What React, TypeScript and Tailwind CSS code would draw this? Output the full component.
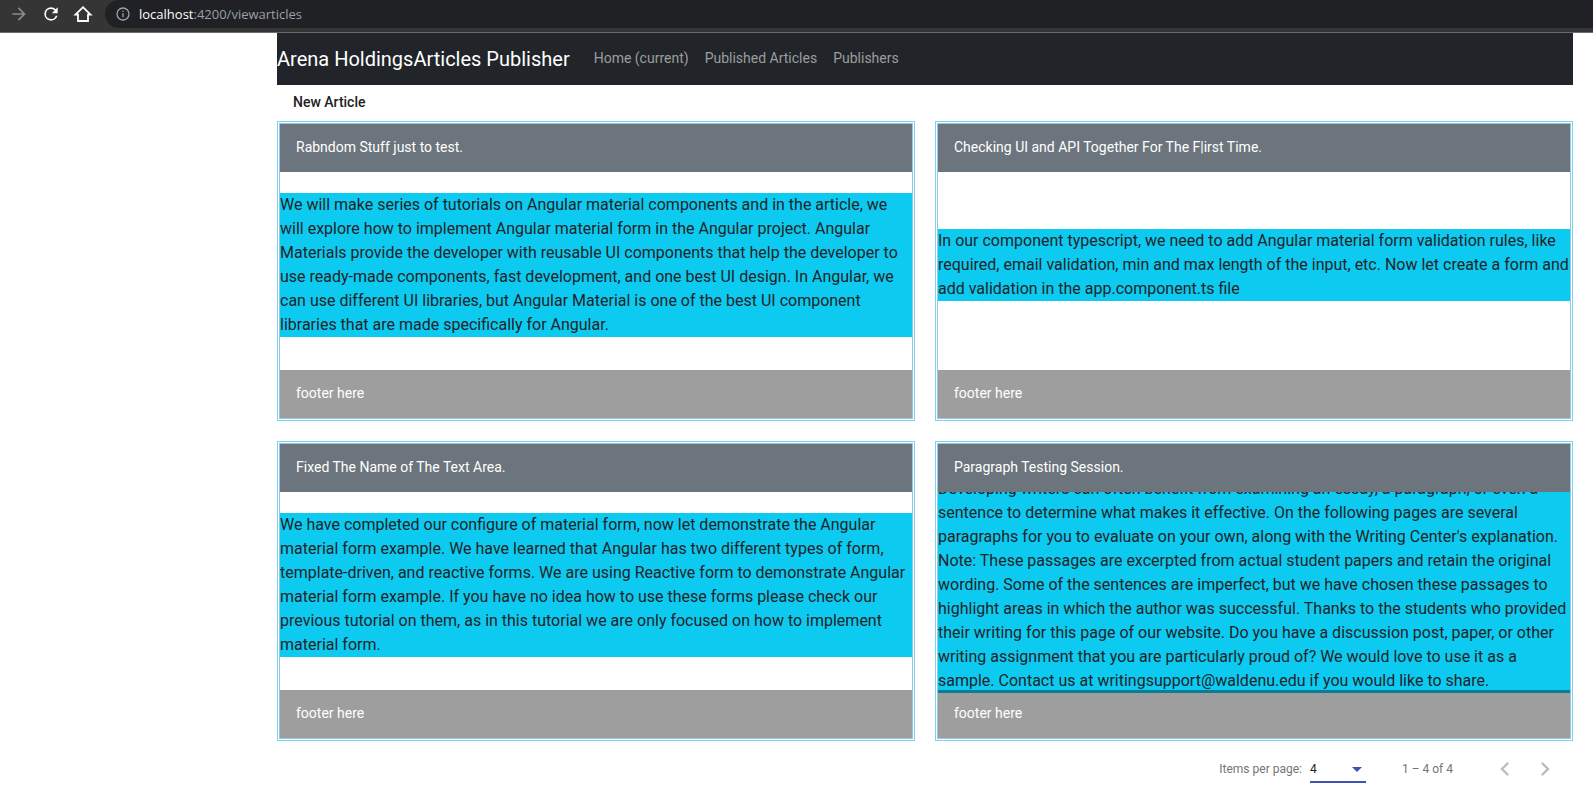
import { ReactNode } from "react";

type Article = { title: string; body: string };

const articles: Article[] = [
  {
    title: "Rabndom Stuff just to test.",
    body: "We will make series of tutorials on Angular material components and in the article, we will explore how to implement Angular material form in the Angular project. Angular Materials provide the developer with reusable UI components that help the developer to use ready-made components, fast development, and one best UI design. In Angular, we can use different UI libraries, but Angular Material is one of the best UI component libraries that are made specifically for Angular.",
  },
  {
    title: "Checking UI and API Together For The F|irst Time.",
    body: "In our component typescript, we need to add Angular material form validation rules, like required, email validation, min and max length of the input, etc. Now let create a form and add validation in the app.component.ts file",
  },
  {
    title: "Fixed The Name of The Text Area.",
    body: "We have completed our configure of material form, now let demonstrate the Angular material form example. We have learned that Angular has two different types of form, template-driven, and reactive forms. We are using Reactive form to demonstrate Angular material form example. If you have no idea how to use these forms please check our previous tutorial on them, as in this tutorial we are only focused on how to implement material form.",
  },
  {
    title: "Paragraph Testing Session.",
    body: "Developing writers can often benefit from examining an essay, a paragraph, or even a sentence to determine what makes it effective. On the following pages are several paragraphs for you to evaluate on your own, along with the Writing Center's explanation. Note: These passages are excerpted from actual student papers and retain the original wording. Some of the sentences are imperfect, but we have chosen these passages to highlight areas in which the author was successful. Thanks to the students who provided their writing for this page of our website. Do you have a discussion post, paper, or other writing assignment that you are particularly proud of? We would love to use it as a sample. Contact us at writingsupport@waldenu.edu if you would like to share.",
  },
];

function Icon({ path, className }: { path: string; className: string }) {
  return (
    <svg viewBox="0 0 24 24" className={className} fill="currentColor" aria-hidden="true">
      <path d={path} />
    </svg>
  );
}

function IconButton({ label, className, children }: { label: string; className: string; children: ReactNode }) {
  return (
    <button type="button" aria-label={label} className={className}>
      {children}
    </button>
  );
}

function BrowserBar() {
  return (
    <header className="flex h-[33px] items-start border-b border-[#6b6b6b] bg-[#353535] pl-[7px]">
      <div className="flex h-7 items-center gap-2">
        <IconButton label="Forward" className="flex size-6 items-center justify-center text-[#8a8a8a]">
          <Icon className="size-5" path="M12 4l-1.41 1.41L16.17 11H4v2h12.17l-5.58 5.59L12 20l8-8z" />
        </IconButton>
        <IconButton label="Reload" className="flex size-6 items-center justify-center text-white">
          <Icon
            className="size-5"
            path="M17.65 6.35A7.95 7.95 0 0 0 12 4a8 8 0 1 0 7.73 10h-2.08A6 6 0 1 1 12 6c1.66 0 3.14.69 4.22 1.78L13 11h7V4z"
          />
        </IconButton>
        <IconButton label="Home" className="flex size-6 items-center justify-center text-white">
          <svg viewBox="0 0 20 20" className="size-5" fill="none" stroke="currentColor" strokeWidth="1.8" aria-hidden="true">
            <path d="M2.5 10.6H5V17h10v-6.4h2.5L10 3.2z" />
          </svg>
        </IconButton>
      </div>
      <div className="ml-2.5 flex h-7 flex-1 items-center gap-2 rounded-l-full bg-[#202124] pl-2.5 text-[#9aa0a6]">
        <Icon
          className="size-4"
          path="M11 7h2v2h-2zm0 4h2v6h-2zm1-9a10 10 0 1 0 0 20 10 10 0 0 0 0-20zm0 18a8 8 0 1 1 0-16 8 8 0 0 1 0 16z"
        />
        <span className="pt-0.5 font-['Open_Sans',sans-serif] text-[13px]">
          <span className="text-white">localhost</span>:4200/viewarticles
        </span>
      </div>
    </header>
  );
}

function ArticleTile({ article }: { article: Article }) {
  return (
    <article className="relative flex h-[300px] items-center overflow-hidden border-3 border-double border-[#87ceeb] pb-3">
      <p className="w-full bg-[#0dcaf0] text-base text-[#212529]">{article.body}</p>
      <h2 className="absolute inset-x-0 top-0 flex h-12 items-center bg-[#6c757d] px-4 pb-0.5 text-sm text-white">
        {article.title}
      </h2>
      <footer className="absolute inset-x-0 bottom-0 flex h-12 items-center bg-black/38 px-4 pb-0.5 text-sm text-white">
        footer here
      </footer>
    </article>
  );
}

function Paginator() {
  return (
    <div className="flex h-14 items-center justify-end text-xs text-[#757575]">
      <label htmlFor="page-size">Items per page:</label>
      <div className="relative ml-2 w-14 border-b-2 border-[#3f51b5] pt-0.5">
        <select id="page-size" defaultValue="4" className="h-6 w-full appearance-none bg-transparent text-[#212121]">
          <option>4</option>
          <option>8</option>
          <option>12</option>
        </select>
        <svg viewBox="0 0 10 5" className="pointer-events-none absolute top-3 right-1 h-[5px] w-2.5 text-[#3f51b5]" fill="currentColor">
          <path d="M0 0h10L5 5z" />
        </svg>
      </div>
      <span className="mr-8 ml-9">1 – 4 of 4</span>
      <IconButton label="Previous page" className="flex size-10 items-center justify-center text-[#bdbdbd]">
        <Icon className="size-7" path="M15.41 7.41L14 6l-6 6 6 6 1.41-1.41L10.83 12z" />
      </IconButton>
      <IconButton label="Next page" className="mr-2 flex size-10 items-center justify-center text-[#bdbdbd]">
        <Icon className="size-7" path="M10 6L8.59 7.41 13.17 12l-4.58 4.59L10 18l6-6z" />
      </IconButton>
    </div>
  );
}

export default function App() {
  return (
    <div className="min-h-screen bg-white font-[Roboto,sans-serif]">
      <BrowserBar />
      <main className="pr-5 pl-[277px]">
        <nav className="flex h-[52px] items-center bg-[#212529] text-sm text-[#9b9d9e]">
          <a href="#" className="mr-6 text-xl text-white">
            Arena HoldingsArticles Publisher
          </a>
          <div className="flex gap-4 pb-0.5">
            <a href="#">Home (current)</a>
            <a href="#">Published Articles</a>
            <a href="#">Publishers</a>
          </div>
        </nav>
        <button type="button" className="flex h-9 items-center px-4 pb-0.5 text-sm font-medium text-[#212121]">
          New Article
        </button>
        <section className="grid grid-cols-2 gap-5">
          {articles.map((article) => (
            <ArticleTile key={article.title} article={article} />
          ))}
        </section>
        <Paginator />
      </main>
    </div>
  );
}
